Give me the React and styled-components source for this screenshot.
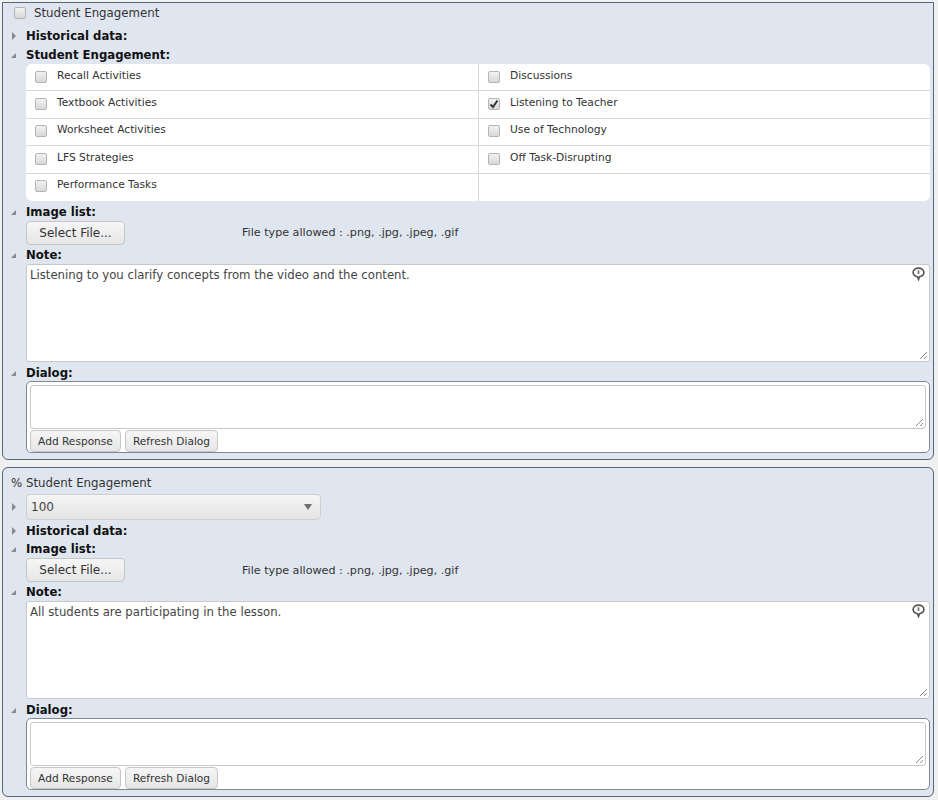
import React from "react";
import styled, { createGlobalStyle } from "styled-components";

const GlobalStyle = createGlobalStyle`
  html, body {
    margin: 0;
    padding: 0;
    background: #f0f0f0;
    font-family: "DejaVu Sans", Verdana, sans-serif;
    color: #333;
  }
`;

const Page = styled.div`
  width: 938px;
  height: 800px;
  overflow: hidden;
  padding: 2px 4px 0 2px;
  box-sizing: border-box;
`;

const Panel = styled.section`
  box-sizing: border-box;
  height: ${(p) => p.$height}px;
  margin-bottom: 7px;
  border: 1.5px solid #56677c;
  border-top-width: ${(p) => (p.$first ? 1 : 1.5)}px;
  border-radius: ${(p) => (p.$first ? "0 0 6px 6px" : "6px")};
  background: #dfe6ef;
  padding: 0 3px 0 8px;
`;

const Title = styled.div`
  box-sizing: border-box;
  height: ${(p) => p.$height}px;
  display: flex;
  align-items: center;
  gap: 8px;
  font-size: 11.8px;
  color: #333;
  padding-left: ${(p) => p.$indent || 0}px;
  padding-top: ${(p) => p.$pad || 0}px;
`;

const Section = styled.div`
  display: grid;
  grid-template-columns: 15px 1fr;
  margin-top: ${(p) => p.$top || 0}px;
`;

const Arrow = styled.span`
  width: 0;
  height: 0;
  margin-top: ${(p) => p.$offset ?? (p.$open ? 5 : 3)}px;
  ${(p) =>
    p.$open
      ? `border-bottom: 5px solid #8a8a8a; border-left: 5px solid transparent; margin-left: 0;`
      : `border-left: 4px solid #8a8a8a; border-top: 4px solid transparent; border-bottom: 4px solid transparent; margin-left: 1px;`}
`;

const Label = styled.div`
  font-size: 11.7px;
  font-weight: 700;
  line-height: 14px;
  color: #111;
`;

const Check = styled.span`
  box-sizing: border-box;
  flex: none;
  width: 12px;
  height: 12px;
  border: 1px solid #b4b4b4;
  border-radius: 2px;
  background: linear-gradient(#f2f2f2, #d8d8d8);
  display: inline-flex;
  align-items: center;
  justify-content: center;
`;

const OptionGrid = styled.div`
  display: grid;
  grid-template-columns: 452px 1fr;
  grid-auto-rows: 27.4px;
  margin-top: 2px;
  background: #fff;
  border-radius: 6px;
  overflow: hidden;
`;

const Option = styled.div`
  display: flex;
  align-items: flex-start;
  gap: 10px;
  padding: 4.500px 0 0 9px;
  font-size: 10.7px;
  line-height: 13px;
  color: #333;
  border-bottom: ${(p) => (p.$last ? "none" : "1px solid #d8d8d8")};
  border-left: ${(p) => (p.$right ? "1px solid #d8d8d8" : "none")};
  box-sizing: border-box;
  ${Check} {
    margin-top: 2px;
  }
`;

const FileRow = styled.div`
  display: flex;
  align-items: center;
  margin-top: 2px;
`;

const Button = styled.button`
  box-sizing: border-box;
  width: ${(p) => p.$width}px;
  height: ${(p) => p.$height}px;
  padding: 0;
  border: 1px solid #c6c6c6;
  border-radius: 4px;
  background: linear-gradient(#f6f6f6, #e6e6e6);
  font-family: inherit;
  font-size: ${(p) => p.$size}px;
  color: #333;
`;

const FileHint = styled.span`
  margin-left: 117px;
  font-size: 11.15px;
  color: #333;
`;

const NoteWrap = styled.div`
  position: relative;
  box-sizing: border-box;
  height: 98px;
  margin-top: 2px;
  padding: 3px 3px;
  background: #fff;
  border: 1px solid #c8c8c8;
  border-radius: 3px;
  font-size: 11.7px;
  line-height: 15px;
  color: #444;
`;

const NoteIcon = styled.svg`
  position: absolute;
  top: 2px;
  right: 4px;
`;

const Grip = styled.svg`
  position: absolute;
  right: 1px;
  bottom: 1px;
`;

const DialogBox = styled.div`
  box-sizing: border-box;
  height: 72px;
  margin-top: 1px;
  padding: 3px;
  background: #fff;
  border: 1px solid #7f8894;
  border-radius: 5px;
`;

const DialogInput = styled.div`
  position: relative;
  box-sizing: border-box;
  height: 44px;
  background: #fff;
  border: 1px solid #c8c8c8;
  border-radius: 3px;
`;

const ButtonRow = styled.div`
  display: flex;
  gap: 4px;
  margin-top: 1px;
`;

const Select = styled.div`
  box-sizing: border-box;
  width: 295px;
  height: 26px;
  display: flex;
  align-items: center;
  justify-content: space-between;
  padding: 0 8px 0 4px;
  border: 1px solid #cfcfcf;
  border-radius: 4px;
  background: linear-gradient(#f5f5f5, #e4e4e4);
  font-size: 12px;
  color: #444;
`;

const Caret = styled.span`
  width: 0;
  height: 0;
  border-left: 4px solid transparent;
  border-right: 4px solid transparent;
  border-top: 6px solid #6f6f6f;
`;

const left = ["Recall Activities", "Textbook Activities", "Worksheet Activities", "LFS Strategies", "Performance Tasks"];
const right = ["Discussions", "Listening to Teacher", "Use of Technology", "Off Task-Disrupting", ""];

const GripMark = () => (
  <Grip width="9" height="9" viewBox="0 0 9 9">
    <path d="M1 8 L8 1 M5 8 L8 5" stroke="#8c8c8c" strokeWidth="1" fill="none" />
  </Grip>
);

const FileBlock = () => (
  <Section $top={4}>
    <Arrow $open />
    <div>
      <Label>Image list:</Label>
      <FileRow>
        <Button $width={99} $height={24} $size={12}>Select File...</Button>
        <FileHint>File type allowed : .png, .jpg, .jpeg, .gif</FileHint>
      </FileRow>
    </div>
  </Section>
);

const NoteBlock = ({ text }) => (
  <Section $top={3}>
    <Arrow $open />
    <div>
      <Label>Note:</Label>
      <NoteWrap>
        {text}
        <NoteIcon width="13" height="14" viewBox="0 0 12 13">
          <path d="M6 1 C9 1 11 2.800 11 5 C11 7.200 9 9 7 9 L6 11.500 L5 9 C3 9 1 7.200 1 5 C1 2.800 3 1 6 1 Z" fill="none" stroke="#555" strokeWidth="1.500" />
          <rect x="5.200" y="3" width="1.600" height="3.500" fill="#777" />
        </NoteIcon>
        <GripMark />
      </NoteWrap>
    </div>
  </Section>
);

const DialogBlock = () => (
  <Section $top={4}>
    <Arrow $open />
    <div>
      <Label>Dialog:</Label>
      <DialogBox>
        <DialogInput><GripMark /></DialogInput>
        <ButtonRow>
          <Button $width={91} $height={22} $size={10.600}>Add Response</Button>
          <Button $width={93} $height={22} $size={10.600}>Refresh Dialog</Button>
        </ButtonRow>
      </DialogBox>
    </div>
  </Section>
);

export default function App() {
  return (
    <Page>
      <GlobalStyle />
      <Panel $first $height={458}>
        <Title $height={19} $indent={3}>
          <Check />
          <span>Student Engagement</span>
        </Title>
        <Section $top={7}>
          <Arrow />
          <Label>Historical data:</Label>
        </Section>
        <Section $top={5}>
          <Arrow $open />
          <div>
            <Label>Student Engagement:</Label>
            <OptionGrid>
              {left.map((name, i) => (
                <React.Fragment key={name}>
                  <Option $last={i === 4}>
                    <Check />
                    <span>{name}</span>
                  </Option>
                  <Option $right $last={i === 4}>
                    {right[i] && (
                      <Check>
                        {right[i] === "Listening to Teacher" && (
                          <svg width="10" height="10" viewBox="0 0 10 10">
                            <path d="M1.500 5.500 L4 8 L8.500 1.500" fill="none" stroke="#333" strokeWidth="2" />
                          </svg>
                        )}
                      </Check>
                    )}
                    <span>{right[i]}</span>
                  </Option>
                </React.Fragment>
              ))}
            </OptionGrid>
          </div>
        </Section>
        <FileBlock />
        <NoteBlock text="Listening to you clarify concepts from the video and the content." />
        <DialogBlock />
      </Panel>
      <Panel $height={330}>
        <Title $height={26} $pad={3}>
          <span>% Student Engagement</span>
        </Title>
        <Section>
          <Arrow $offset={9} />
          <Select>
            100
            <Caret />
          </Select>
        </Section>
        <Section $top={4}>
          <Arrow />
          <Label>Historical data:</Label>
        </Section>
        <FileBlock />
        <NoteBlock text="All students are participating in the lesson." />
        <DialogBlock />
      </Panel>
    </Page>
  );
}
